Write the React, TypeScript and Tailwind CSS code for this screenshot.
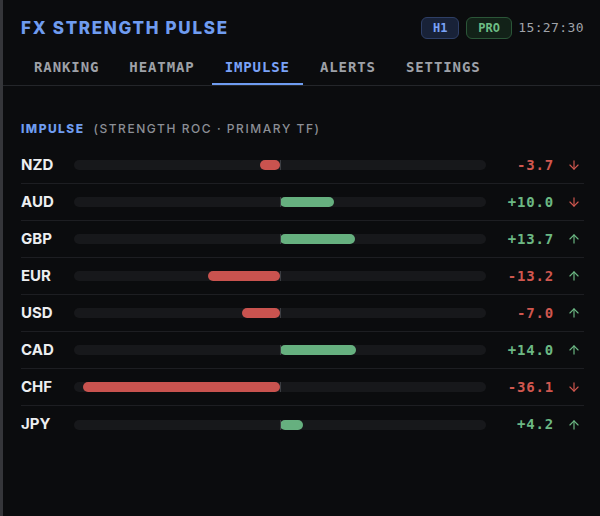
import React from "react";
import { ArrowDown, ArrowUp } from "lucide-react";

type Row = { ccy: string; roc: number; dir: "up" | "down" };

const rows: Row[] = [
  { ccy: "NZD", roc: -3.7, dir: "down" },
  { ccy: "AUD", roc: 10.0, dir: "down" },
  { ccy: "GBP", roc: 13.7, dir: "up" },
  { ccy: "EUR", roc: -13.2, dir: "up" },
  { ccy: "USD", roc: -7.0, dir: "up" },
  { ccy: "CAD", roc: 14.0, dir: "up" },
  { ccy: "CHF", roc: -36.1, dir: "down" },
  { ccy: "JPY", roc: 4.2, dir: "up" },
];

const tabs = ["RANKING", "HEATMAP", "IMPULSE", "ALERTS", "SETTINGS"];

// half of the track covers this many ROC units
const SCALE = 37.8;

const mono = "font-['DejaVu_Sans_Mono',monospace]";
const sans = "font-['Inter','Noto_Sans',sans-serif]";

function ImpulseBar({ value }: { value: number }) {
  const pct = Math.min(Math.abs(value) / SCALE, 1) * 50;
  const pos = value >= 0;
  return (
    <div className="relative h-[10px] flex-1 rounded-full bg-[#17181b]">
      <div
        className={`absolute top-0 h-full rounded-full ${pos ? "bg-[#66b07f]" : "bg-[#c9534f]"}`}
        style={pos ? { left: "50%", width: `${pct}%` } : { right: "50%", width: `${pct}%` }}
      />
      <div className="absolute left-1/2 top-0 h-full w-px bg-[#3b3d42]" />
    </div>
  );
}

export default function App() {
  return (
    <div className="h-[516px] w-[600px] overflow-hidden border-l-[3px] border-[#35363a] bg-[#0b0c0e] text-[#e8e9eb]">
      <header className="mt-[13px] flex h-[30px] items-center justify-between pl-[18px] pr-[16px]">
        <h1 className={`${sans} pt-[2px] text-[17px] font-extrabold tracking-[0.1em] text-[#6f9cf0]`}>
          FX STRENGTH PULSE
        </h1>
        <div className="flex items-center">
          <span className={`${mono} flex h-[22px] w-[38px] items-center justify-center rounded-md border border-[#2e3f66] bg-[#182238] text-[12px] font-bold text-[#7aa2f7]`}>
            H1
          </span>
          <span className={`${mono} ml-[7px] flex h-[22px] w-[46px] items-center justify-center rounded-md border border-[#2b5638] bg-[#122218] text-[12px] font-bold text-[#6dbd85]`}>
            PRO
          </span>
          <span className={`${mono} ml-[6px] text-[13px] tracking-[0.4px] text-[#a0a3a9]`}>15:27:30</span>
        </div>
      </header>

      <nav className="mt-[6px] flex gap-[4px] border-b border-[#24262a] pl-[18px]">
        {tabs.map((t) => {
          const active = t === "IMPULSE";
          return (
            <div
              key={t}
              className={`${mono} flex h-[36px] items-center border-b-2 px-[13px] pt-[2px] text-[14px] font-bold tracking-[0.9px] ${
                active ? "border-[#6f9cf0] text-[#7aa2f7]" : "border-transparent text-[#9ea1a8]"
              }`}
            >
              {t}
            </div>
          );
        })}
      </nav>

      <section className="pl-[18px] pr-[16px] pt-[35px]">
        <div className="flex h-[16px] items-center gap-[9px] text-[12px]">
          <span className={`${sans} font-extrabold tracking-[0.12em] text-[#6f9cf0]`}>IMPULSE</span>
          <span className={`${sans} font-medium tracking-[0.13em] text-[#8c8f96]`}>
            (STRENGTH ROC · PRIMARY TF)
          </span>
        </div>

        <div className="mt-[10px]">
          {rows.map((r, i) => {
            const pos = r.roc >= 0;
            const up = r.dir === "up";
            const Arrow = up ? ArrowUp : ArrowDown;
            return (
              <div
                key={r.ccy}
                className={`flex h-[37px] items-center ${i < rows.length - 1 ? "border-b border-[#1d1e22]" : ""}`}
              >
                <span className={`${sans} w-[53px] text-[15px] font-bold text-[#eceef0]`}>{r.ccy}</span>
                <ImpulseBar value={r.roc} />
                <span
                  className={`${mono} w-[68px] text-right text-[14px] font-bold tracking-[0.8px] ${
                    pos ? "text-[#6cb884]" : "text-[#d0574f]"
                  }`}
                >
                  {pos ? "+" : ""}
                  {r.roc.toFixed(1)}
                </span>
                <span
                  className={`flex w-[30px] justify-end pr-[3px] ${up ? "text-[#6cb884]" : "text-[#d0574f]"}`}
                >
                  <Arrow size={14} strokeWidth={2} />
                </span>
              </div>
            );
          })}
        </div>
      </section>
    </div>
  );
}
